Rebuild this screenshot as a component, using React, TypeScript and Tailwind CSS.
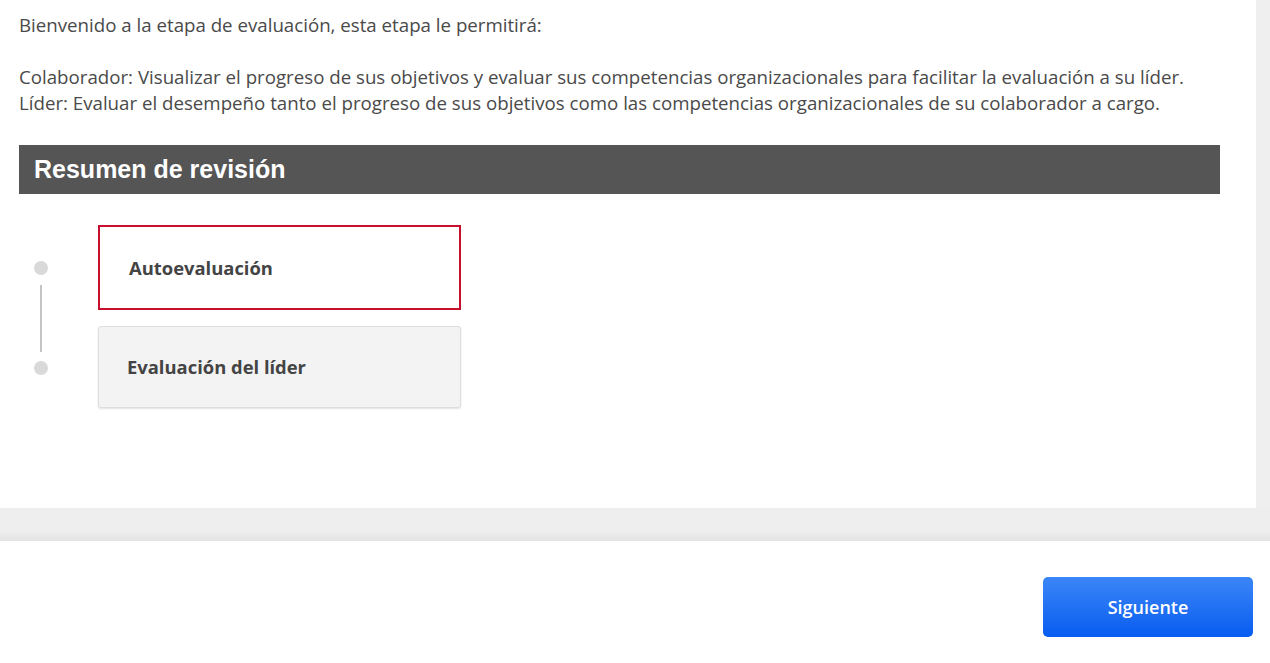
export default function App() {
  const steps = [
    { label: 'Autoevaluación', active: true },
    { label: 'Evaluación del líder', active: false },
  ];

  return (
    <div className="h-[663px] w-[1270px] overflow-hidden bg-[#efefef] font-['Open_Sans',sans-serif]">
      <div className="flex h-[541px] flex-col">
        <div className="mr-[14px] h-[508px] bg-white pl-[19px] pr-[36px] pt-[12px]">
          <p className="text-[18.7px] leading-[26px] text-[#4a4a4a]">
            Bienvenido a la etapa de evaluación, esta etapa le permitirá:
            <br />
            <br />
            Colaborador: Visualizar el progreso de sus objetivos y evaluar sus competencias organizacionales para facilitar la evaluación a su líder.
            <br />
            Líder: Evaluar el desempeño tanto el progreso de sus objetivos como las competencias organizacionales de su colaborador a cargo.
          </p>

          <div className="mt-[29px] flex h-[49px] items-center bg-[#555555] pl-[15px]">
            <h2 className="font-['Liberation_Sans',sans-serif] text-[25px] font-bold text-white">Resumen de revisión</h2>
          </div>

          <div className="mt-[31px] flex">
            {/* timeline */}
            <div className="flex w-[79px] flex-col items-center pr-[35px] pt-[36px]">
              <span className="h-[14px] w-[14px] shrink-0 rounded-full bg-[#d9d9d9]" />
              <span className="mb-[9px] mt-[10px] h-[67px] w-[2px] shrink-0 bg-[#c4c4c4]" />
              <span className="h-[14px] w-[14px] shrink-0 rounded-full bg-[#d9d9d9]" />
            </div>

            <div className="flex w-[363px] flex-col gap-[16px]">
              {steps.map((s) =>
                s.active ? (
                  <div key={s.label} className="flex h-[85px] items-center border-2 border-[#c8102e] bg-white pl-[29px]">
                    <span className="text-[18.4px] font-bold text-[#444]">{s.label}</span>
                  </div>
                ) : (
                  <div
                    key={s.label}
                    className="flex h-[82px] items-center rounded-[3px] border border-[#dedede] bg-[#f3f3f3] pl-[28px] shadow-[0_1px_2px_rgba(0,0,0,0.12)]"
                  >
                    <span className="text-[18.4px] font-bold text-[#444]">{s.label}</span>
                  </div>
                ),
              )}
            </div>
          </div>
        </div>
        <div className="flex-1 bg-gradient-to-b from-[#eeeeee] from-70% to-[#e3e3e3]" />
      </div>

      <div className="flex h-[122px] justify-end bg-white pr-[17px] pt-[36px] shadow-[0_-1px_3px_rgba(0,0,0,0.08)]">
        <button className="h-[60px] w-[210px] rounded-[5px] bg-gradient-to-b from-[#3a85f7] to-[#045cf0] text-[18px] font-semibold text-white">
          Siguiente
        </button>
      </div>
    </div>
  );
}
